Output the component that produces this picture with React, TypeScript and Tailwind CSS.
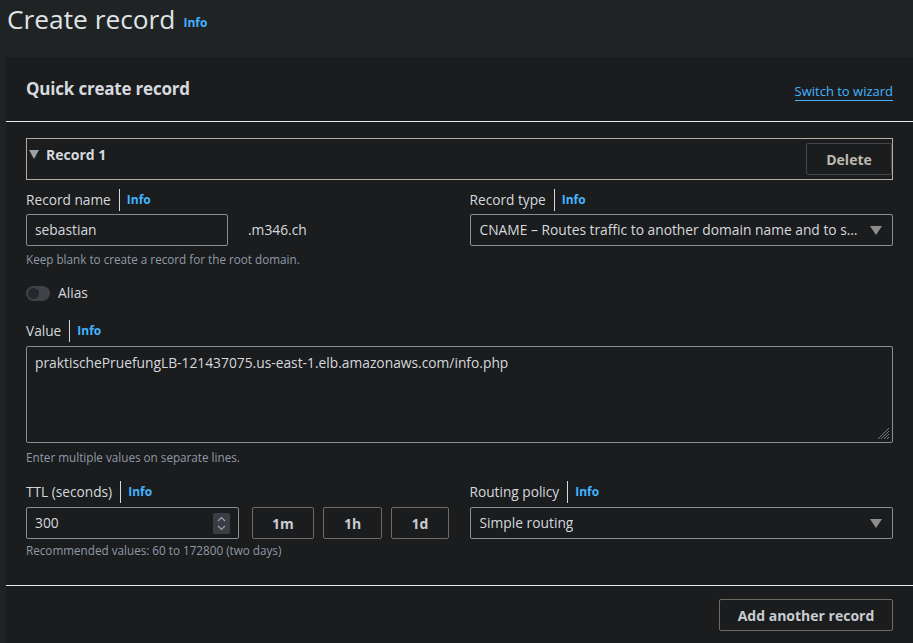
import React from "react";

const font = { fontFamily: '"Open Sans", "Noto Sans", sans-serif' };

function Caret() {
  return (
    <svg width="12" height="9" viewBox="0 0 12 9" aria-hidden="true">
      <path d="M0 0h12L6 9z" fill="#8d8d8d" />
    </svg>
  );
}

function FieldLabel({ label }: { label: string }) {
  return (
    <div className="flex h-[20px] items-center text-[13.7px] text-[#d5d9dd]">
      <span>{label}</span>
      <span className="ml-[8px] h-[22px] w-px bg-[#d5d9dd]" />
      <span className="ml-[7px] text-[12px] font-bold text-[#42b4ff]">Info</span>
    </div>
  );
}

function Hint({ children }: { children: React.ReactNode }) {
  return <p className="text-[11.7px] leading-[16px] text-[#8f9aa6]">{children}</p>;
}

function Select({ value }: { value: string }) {
  return (
    <div className="flex h-[32px] items-center justify-between rounded-[2px] border border-[#8a8d91] bg-[#1b1c1e] pl-[9px] pr-[10px] text-[13.8px] text-[#d5d9dd]">
      <span className="truncate">{value}</span>
      <span className="ml-[10px] shrink-0">
        <Caret />
      </span>
    </div>
  );
}

function TtlButton({ label, width }: { label: string; width: string }) {
  return (
    <div
      className={`flex h-[32px] ${width} items-center justify-center rounded-[2px] border border-[#6f6a62] text-[14px] font-bold text-[#c9ccd0]`}
    >
      {label}
    </div>
  );
}

export default function App() {
  return (
    <div className="h-[643px] w-[913px] overflow-hidden bg-[#1f2324]" style={font}>
      <div className="flex h-[57px] items-start pl-[7px]">
        <h1 className="text-[26.3px] leading-[38px] text-[#dfe3e6]">Create record</h1>
        <span className="ml-[8px] mt-[14px] text-[12px] font-bold text-[#42b4ff]">Info</span>
      </div>

      <section className="ml-[6px] h-[586px] bg-[#1b1c1e]">
        <header className="flex h-[64px] items-center justify-between px-5">
          <h2 className="text-[17px] font-bold tracking-[-0.2px] text-[#d5d9dd]">
            Quick create record
          </h2>
          <a className="mt-[6px] border-b border-[#42b4ff] text-[13px] leading-[17px] text-[#42b4ff]">
            Switch to wizard
          </a>
        </header>
        <div className="h-px bg-[#e9ebed]" />

        <div className="px-5 pt-[16px]">
          <div className="flex h-[42px] items-start justify-between border border-[#b3ad9f] pl-[2px]">
            <div className="mt-[5px] flex items-center gap-[7px]">
              <svg width="10" height="9" viewBox="0 0 10 9" aria-hidden="true">
                <path d="M0 0h10L5 9z" fill="#9aa0a6" />
              </svg>
              <span className="text-[14px] font-bold text-[#d5d9dd]">Record 1</span>
            </div>
            <div className="mt-[4px] flex h-[32px] w-[86px] items-center justify-center rounded-[2px] border border-[#44464a] text-[14px] font-bold text-[#bdb9af]">
              Delete
            </div>
          </div>

          <div className="grid grid-cols-2 gap-x-5">
            <div>
              <div className="mt-[10px]">
                <FieldLabel label="Record name" />
              </div>
              <div className="mt-[4px] flex items-center">
                <div className="flex h-[32px] w-[202px] items-center rounded-[2px] border border-[#8a8d91] pl-[8px] text-[13.8px] text-[#d5d9dd]">
                  sebastian
                </div>
                <span className="ml-[20px] text-[13.8px] text-[#d5d9dd]">.m346.ch</span>
              </div>
              <div className="mt-[5px]">
                <Hint>Keep blank to create a record for the root domain.</Hint>
              </div>
              <div className="mt-[17px] flex h-[18px] items-center">
                <div className="flex h-[15px] w-[24px] items-center rounded-full bg-[#3f4247] pl-[2px]">
                  <div className="h-[11px] w-[11px] rounded-full bg-[#25272a]" />
                </div>
                <span className="ml-[8px] text-[13.8px] text-[#d5d9dd]">Alias</span>
              </div>
            </div>
            <div>
              <div className="mt-[10px]">
                <FieldLabel label="Record type" />
              </div>
              <div className="mt-[4px]">
                <Select value="CNAME – Routes traffic to another domain name and to some AWS resources" />
              </div>
            </div>
          </div>

          <div className="mt-[19px]">
            <FieldLabel label="Value" />
          </div>
          <div className="relative mt-[5px] h-[97px] rounded-[2px] border border-[#8a8d91] px-[8px] pt-[6px] text-[13.8px] text-[#d5d9dd]">
            praktischePruefungLB-121437075.us-east-1.elb.amazonaws.com/info.php
            <svg
              className="absolute bottom-[2px] right-[2px]"
              width="12"
              height="12"
              viewBox="0 0 12 12"
              aria-hidden="true"
            >
              <path d="M11 3L3 11M11 6L6 11M11 9L9 11M11 0L0 11" stroke="#777" strokeWidth="1" />
            </svg>
          </div>
          <div className="mt-[6px]">
            <Hint>Enter multiple values on separate lines.</Hint>
          </div>

          <div className="grid grid-cols-2 gap-x-5">
            <div>
              <div className="mt-[17px]">
                <FieldLabel label="TTL (seconds)" />
              </div>
              <div className="mt-[5px] flex items-center">
                <div className="flex h-[32px] w-[213px] items-center justify-between rounded-[2px] border border-[#8a8d91] pl-[8px] pr-[8px] text-[13.8px] text-[#d5d9dd]">
                  <span>300</span>
                  <div className="flex h-[21px] w-[17px] items-center justify-center rounded-[2px] bg-[#3a3d44]">
                    <svg width="9" height="15" viewBox="0 0 9 15" aria-hidden="true">
                      <path d="M1 5l3.5-3.5L8 5M1 10l3.5 3.5L8 10" fill="none" stroke="#9aa0a8" strokeWidth="1.2" />
                    </svg>
                  </div>
                </div>
                <div className="ml-[13px] flex gap-[9px]">
                  <TtlButton label="1m" width="w-[62px]" />
                  <TtlButton label="1h" width="w-[59px]" />
                  <TtlButton label="1d" width="w-[58px]" />
                </div>
              </div>
              <div className="mt-[3px]">
                <Hint>Recommended values: 60 to 172800 (two days)</Hint>
              </div>
            </div>
            <div>
              <div className="mt-[17px]">
                <FieldLabel label="Routing policy" />
              </div>
              <div className="mt-[5px]">
                <Select value="Simple routing" />
              </div>
            </div>
          </div>
        </div>

        <div className="mt-[27px] h-px bg-[#e9ebed]" />
        <div className="flex justify-end px-5 pt-[13px]">
          <div className="flex h-[32px] w-[174px] items-center justify-center rounded-[2px] border border-[#6f6a62] text-[14px] font-bold text-[#c9ccd0]">
            Add another record
          </div>
        </div>
      </section>
    </div>
  );
}
